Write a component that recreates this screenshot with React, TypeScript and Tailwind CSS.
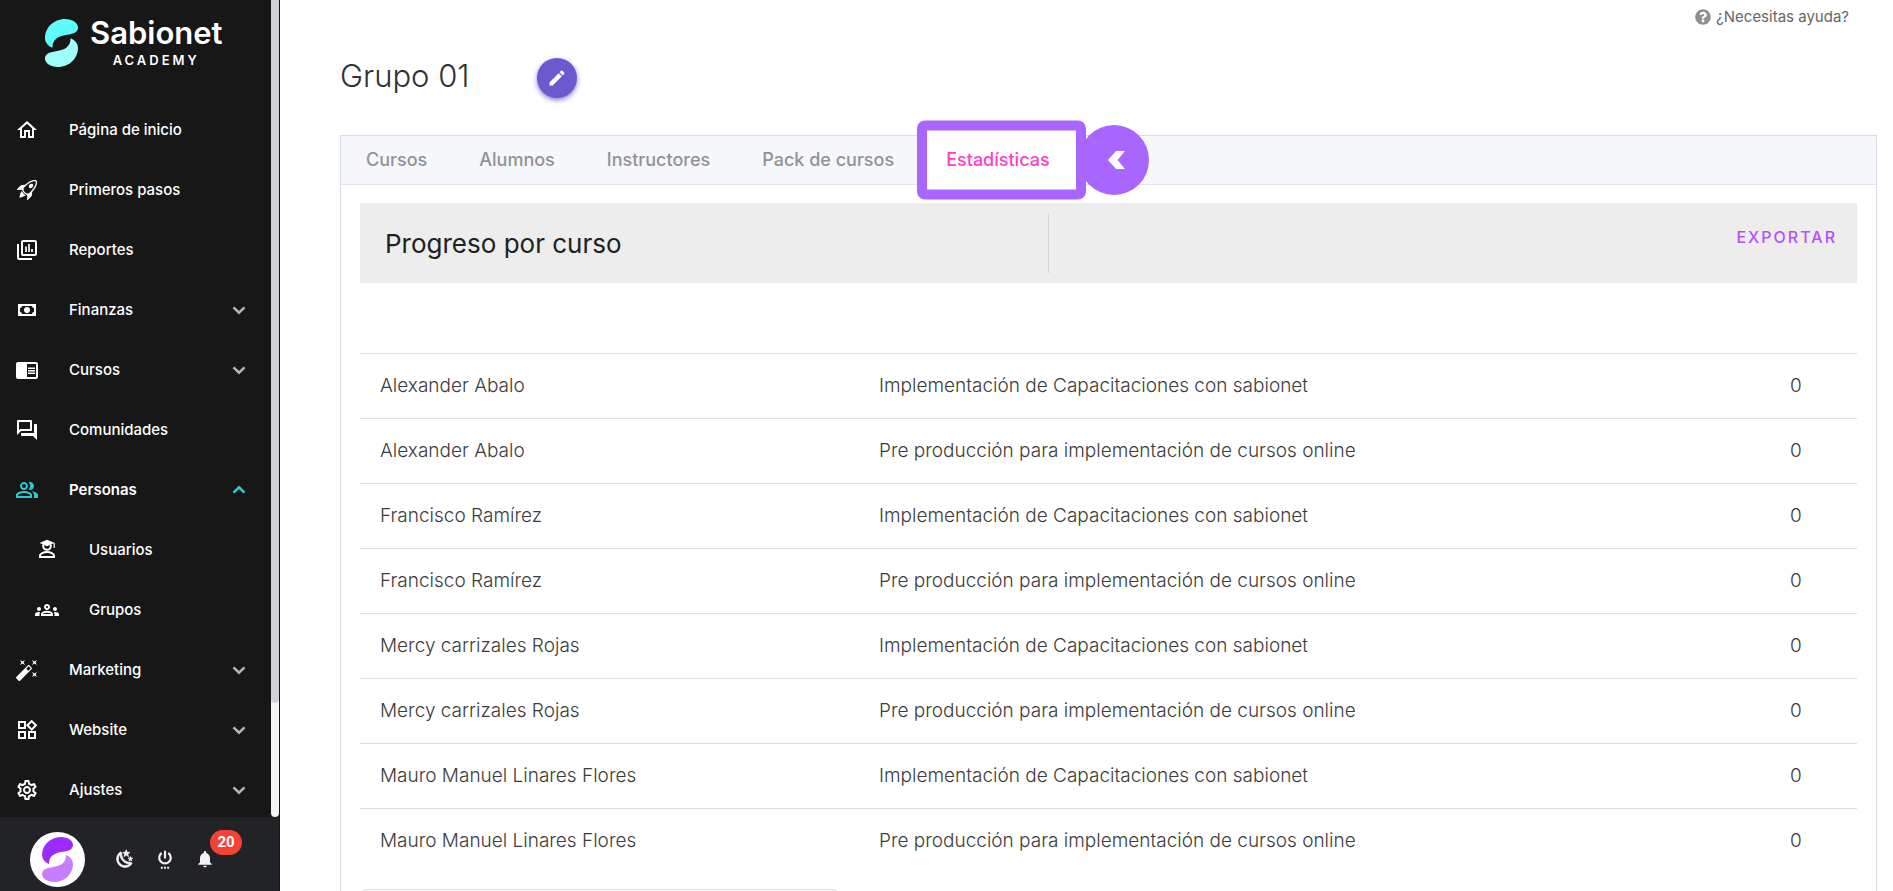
import type { ReactNode } from "react";
import {
  MdChromeReaderMode,
  MdEdit,
  MdNotifications,
  MdOutlineForum,
  MdOutlineGroups,
  MdOutlineHome,
  MdOutlinePeopleAlt,
  MdOutlineSettings,
  MdOutlineWidgets,
} from "react-icons/md";
import { BsRocketTakeoff } from "react-icons/bs";
import { FaQuestionCircle } from "react-icons/fa";

function SabionetMark({ className, top, bottom }: { className: string; top: string; bottom: string }) {
  const lobe = "M7.4 28.8C3 27 0 23.500 0 19 0 9 8.500 0 20 0 27.500 0 33 3.800 33 8.500 33 13 29 14.800 22 15.800 12.500 17.300 7.500 20.500 7.400 28.800z";
  return (
    <svg viewBox="0 0 33 48" className={className} aria-hidden="true">
      <path d={lobe} fill={top} />
      <path d={lobe} fill={bottom} transform="rotate(180 16.5 24)" />
    </svg>
  );
}

function Glyph({ d }: { d: string }) {
  return (
    <svg viewBox="0 0 24 24" className="size-6" fill="currentColor" aria-hidden="true">
      <path d={d} />
    </svg>
  );
}

const cashPath =
  "M3,6H21V18H3V6M12,9A3,3 0 0,1 15,12A3,3 0 0,1 12,15A3,3 0 0,1 9,12A3,3 0 0,1 12,9M7,8A2,2 0 0,1 5,10V14A2,2 0 0,1 7,16H17A2,2 0 0,1 19,14V10A2,2 0 0,1 17,8H7Z";
const wandPath =
  "M7.5,5.6L5,7L6.4,4.5L5,2L7.5,3.4L10,2L8.6,4.5L10,7L7.5,5.6M19.5,15.4L22,14L20.6,16.5L22,19L19.5,17.6L17,19L18.4,16.5L17,14L19.5,15.4M22,2L20.6,4.5L22,7L19.5,5.6L17,7L18.4,4.5L17,2L19.5,3.4L22,2M13.34,12.78L15.78,10.34L13.66,8.22L11.22,10.66L13.34,12.78M14.37,7.29L16.71,9.63C17.1,10 17.1,10.65 16.71,11.04L5.04,22.71C4.65,23.1 4,23.1 3.63,22.71L1.29,20.37C0.9,20 0.9,19.35 1.29,18.96L12.96,7.29C13.35,6.9 14,6.9 14.37,7.29Z";
const moonPath =
  "M17.75,4.09L15.22,6.03L16.13,9.09L13.5,7.28L10.87,9.09L11.78,6.03L9.25,4.09L12.44,4L13.5,1L14.56,4L17.75,4.09M21.25,11L19.61,12.25L20.2,14.23L18.5,13.06L16.8,14.23L17.39,12.25L15.75,11L17.81,10.95L18.5,9L19.19,10.95L21.25,11M18.97,15.95C19.8,15.87 20.69,17.05 20.16,17.8C19.84,18.25 19.5,18.67 19.08,19.07C15.17,23 8.84,23 4.94,19.07C1.03,15.17 1.03,8.83 4.94,4.93C5.34,4.53 5.76,4.17 6.21,3.85C6.96,3.32 8.14,4.21 8.06,5.04C7.79,7.9 8.75,10.87 10.95,13.06C13.14,15.26 16.1,16.22 18.97,15.95M17.33,17.97C14.5,17.81 11.7,16.64 9.53,14.5C7.36,12.31 6.2,9.5 6.04,6.68C3.23,9.82 3.34,14.64 6.35,17.66C9.37,20.67 14.19,20.78 17.33,17.97Z";

function ChartIcon() {
  return (
    <svg viewBox="0 0 24 24" className="size-6" fill="none" stroke="currentColor" strokeWidth="2" aria-hidden="true">
      <rect x="7" y="3" width="14" height="14" rx="1" />
      <path d="M3 6v14a1 1 0 0 0 1 1h13" />
      <path d="M11 8.500V14M14 6v8M17 11v3" strokeWidth="1.700" />
    </svg>
  );
}

function StudentIcon() {
  return (
    <svg viewBox="0 0 24 24" className="size-6" fill="none" stroke="currentColor" strokeWidth="2" aria-hidden="true">
      <path d="M12 1.800 4.600 5 12 8.200 18.600 5.300V10H19.800V5z" fill="currentColor" stroke="none" />
      <path d="M8.200 6.500V8a3.800 3.800 0 0 0 7.600 0V6.500" />
      <path d="M5 19v-1.500c0-2 3.500-3.400 7-3.400s7 1.400 7 3.400V19z" />
    </svg>
  );
}

function PowerIcon() {
  return (
    <svg viewBox="0 0 24 24" className="size-5" fill="none" stroke="currentColor" strokeWidth="2.600" aria-hidden="true">
      <path d="M12 2v9.500M8 4.800a6.900 6.900 0 1 0 8 0" />
      <path d="M7 22.500h2.400M10.800 22.500h2.400M14.600 22.500H17" />
    </svg>
  );
}

function Caret({ open }: { open?: boolean }) {
  return (
    <svg
      viewBox="0 0 14 14"
      className={open ? "size-3.5 text-[#2bcbd0]" : "size-3.5 text-[#b5b5b5]"}
      fill="none"
      stroke="currentColor"
      strokeWidth="2.500"
      aria-hidden="true"
    >
      <path d={open ? "M1.500 9.700 7 4.300l5.500 5.400" : "M1.500 4.300 7 9.700l5.500-5.400"} />
    </svg>
  );
}

type Item = { label: string; icon: ReactNode; caret?: boolean; active?: boolean; child?: boolean };

const items: Item[] = [
  { label: "Página de inicio", icon: <MdOutlineHome className="size-6" /> },
  { label: "Primeros pasos", icon: <BsRocketTakeoff className="size-5" /> },
  { label: "Reportes", icon: <ChartIcon /> },
  { label: "Finanzas", icon: <Glyph d={cashPath} />, caret: true },
  { label: "Cursos", icon: <MdChromeReaderMode className="size-6" />, caret: true },
  { label: "Comunidades", icon: <MdOutlineForum className="size-6" /> },
  { label: "Personas", icon: <MdOutlinePeopleAlt className="size-6 text-[#2bcbd0]" />, caret: true, active: true },
  { label: "Usuarios", icon: <StudentIcon />, child: true },
  { label: "Grupos", icon: <MdOutlineGroups className="size-6" />, child: true },
  { label: "Marketing", icon: <Glyph d={wandPath} />, caret: true },
  { label: "Website", icon: <MdOutlineWidgets className="size-6" />, caret: true },
  { label: "Ajustes", icon: <MdOutlineSettings className="size-6" />, caret: true },
];

function NavItem({ item }: { item: Item }) {
  return (
    <li>
      <a
        href="#"
        className={
          (item.child ? "pl-[35px] " : "pl-[15px] ") +
          (item.active ? "font-semibold " : "font-medium ") +
          "flex h-15 items-center pr-[25px] text-[15px]"
        }
      >
        <span className="flex w-6 justify-center">{item.icon}</span>
        <span className="ml-[30px] flex-1">{item.label}</span>
        {item.caret && <Caret open={item.active} />}
      </a>
    </li>
  );
}

function Sidebar() {
  return (
    <aside className="flex w-[280px] shrink-0 flex-col border-r border-[#171717] bg-[#171717] text-white">
      <div className="flex min-h-0 flex-1">
        <div className="min-w-0 flex-1 overflow-hidden">
          <div className="flex h-25 gap-3 pt-[19px] pl-[45px]">
            <SabionetMark className="h-12 w-[33px]" top="#5ffbfb" bottom="#9cfffb" />
            <div className="flex flex-col items-center">
              <span className="text-[31px] leading-7 font-semibold">Sabionet</span>
              <span className="mt-[5px] text-[13px] leading-4 font-semibold tracking-[3px]">ACADEMY</span>
            </div>
          </div>
          <nav aria-label="Principal">
            <ul>
              {items.map((item) => (
                <NavItem key={item.label} item={item} />
              ))}
            </ul>
          </nav>
        </div>
        <div className="w-2 rounded-b bg-[#f4f4f4]">
          <div className="h-[86%] rounded-b bg-[#d1d1d6]" />
        </div>
      </div>
      <div className="flex h-[74px] shrink-0 items-center bg-[#222327] pt-[10px] pl-[30px] text-[#f3f3f3]">
        <button aria-label="Perfil" className="flex size-[55px] items-center justify-center rounded-full bg-white">
          <SabionetMark className="h-[45px] w-[31px]" top="#9d2bff" bottom="#c77dff" />
        </button>
        <div className="ml-[30px] flex items-center gap-5">
          <button aria-label="Modo oscuro" className="flex size-5 items-center justify-center">
            <svg viewBox="0 0 24 24" className="size-5" fill="currentColor" stroke="currentColor" aria-hidden="true">
              <path d={moonPath} />
            </svg>
          </button>
          <button aria-label="Salir">
            <PowerIcon />
          </button>
          <button aria-label="Notificaciones" className="relative">
            <MdNotifications className="size-5" />
            <span className="absolute -top-[19px] left-[15px] flex h-[25px] w-8 items-center justify-center rounded-full bg-[#f44336] font-[Roboto,sans-serif] text-[15px] font-bold text-white">
              20
            </span>
          </button>
        </div>
      </div>
    </aside>
  );
}

const tabs = ["Cursos", "Alumnos", "Instructores", "Pack de cursos"];

function Tabs() {
  return (
    <div
      role="tablist"
      className="flex h-[49px] items-center gap-[52px] border-b border-[#dfe4ed] bg-[#f5f7fa] pl-[25px] text-lg font-medium text-[#909399]"
    >
      {tabs.map((t) => (
        <button key={t} role="tab" aria-selected="false">
          {t}
        </button>
      ))}
      <div className="relative flex h-[49px] items-center">
        <span className="absolute top-1/2 left-[133px] flex size-[70px] -translate-y-1/2 items-center justify-center rounded-full bg-[#a866ff]">
          <svg viewBox="0 0 17 18" className="ml-1 h-[18px] w-[17px]" fill="#fff" aria-hidden="true">
            <path d="M8 0h9L9.500 9 17 18H8L0 9z" />
          </svg>
        </span>
        <span className="absolute top-1/2 left-[-29px] h-[79px] w-[169px] -translate-y-1/2 rounded-lg border-10 border-[#a866ff] bg-white" />
        <button role="tab" aria-selected="true" className="relative text-[#ff3dcb]">
          Estadísticas
        </button>
      </div>
    </div>
  );
}

const rows = ["Alexander Abalo", "Francisco Ramírez", "Mercy carrizales Rojas", "Mauro Manuel Linares Flores"].flatMap((name) => [
  { name, course: "Implementación de Capacitaciones con sabionet", progress: 0 },
  { name, course: "Pre producción para implementación de cursos online", progress: 0 },
]);

export default function App() {
  return (
    <div className="flex h-screen overflow-hidden bg-white font-[Inter,sans-serif]">
      <Sidebar />
      <main className="flex min-w-0 flex-1 flex-col pr-4 pl-15">
        <div className="flex h-[34px] shrink-0 items-center justify-end pr-7">
          <a href="#" className="flex items-center gap-[5px] text-[15px] text-[#666]">
            <FaQuestionCircle className="size-4 text-[#8f8f8f]" />
            ¿Necesitas ayuda?
          </a>
        </div>
        <header className="flex h-[101px] shrink-0 items-start gap-[67px] pt-6">
          <h1 className="text-[31px] leading-9 font-light text-[#303133]">Grupo 01</h1>
          <button
            aria-label="Editar grupo"
            className="flex size-10 items-center justify-center rounded-full bg-[#6a5acd] text-white shadow-[0_2px_5px_rgba(106,90,205,0.8)]"
          >
            <MdEdit className="size-5" />
          </button>
        </header>
        <section className="flex-1 border border-b-0 border-[#d8dce8]">
          <Tabs />
          <div className="px-[19px] pt-[18px]">
            <div className="flex h-20 items-center bg-[#ededed] py-[10px]">
              <h2 className="flex h-full w-[46%] items-center border-r border-[#d4d4d4] pl-[25px] text-[26px] text-[#212121]">
                Progreso por curso
              </h2>
              <div className="flex h-full flex-1 justify-end pt-3 pr-5">
                <button className="h-6 text-base font-medium tracking-[2px] text-[#b84dff]">EXPORTAR</button>
              </div>
            </div>
            <table className="mt-[70px] w-full table-fixed text-left text-[19px] font-light text-[#3c3c3c]">
              <tbody>
                {rows.map((r) => (
                  <tr key={r.name + r.course} className="h-[65px] border-t border-[#dedee0]">
                    <td className="w-1/3 px-5">{r.name}</td>
                    <td className="px-5">{r.course}</td>
                    <td className="w-[87px] px-5">{r.progress}</td>
                  </tr>
                ))}
              </tbody>
            </table>
            <div className="mt-[15px] h-12 w-8/25 rounded-md border border-[#dcdfe6]" />
          </div>
        </section>
      </main>
    </div>
  );
}
